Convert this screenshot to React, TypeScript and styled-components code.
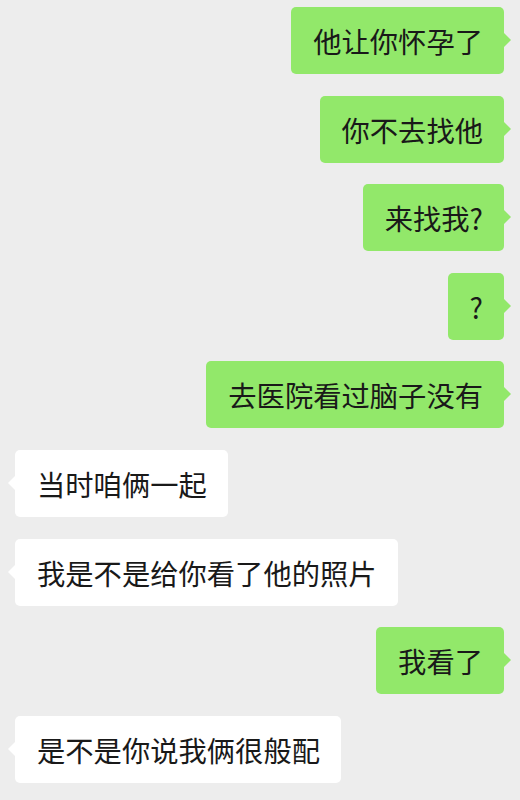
import styled, { createGlobalStyle } from 'styled-components'

const GlobalStyle = createGlobalStyle`
  html, body {
    margin: 0;
    padding: 0;
    background: #ededed;
  }
  body {
    font-family: "Noto Sans CJK SC", "Noto Sans", sans-serif;
  }
`

type Side = 'me' | 'them'

const messages: { side: Side; text: string }[] = [
  { side: 'me', text: '他让你怀孕了' },
  { side: 'me', text: '你不去找他' },
  { side: 'me', text: '来找我?' },
  { side: 'me', text: '?' },
  { side: 'me', text: '去医院看过脑子没有' },
  { side: 'them', text: '当时咱俩一起' },
  { side: 'them', text: '我是不是给你看了他的照片' },
  { side: 'me', text: '我看了' },
  { side: 'them', text: '是不是你说我俩很般配' },
]

export default function App(): JSX.Element {
  return (
    <>
      <GlobalStyle />
      <ChatArea>
        {messages.map((m, i) => (
          <Row key={i} $side={m.side}>
            <Bubble $side={m.side}>{m.text}</Bubble>
          </Row>
        ))}
      </ChatArea>
    </>
  )
}

const ChatArea = styled.div`
  width: 520px;
  height: 800px;
  box-sizing: border-box;
  padding: 7px 16px 0 15px;
  display: flex;
  flex-direction: column;
  gap: 21.6px;
  overflow: hidden;
  background: #ededed;
`

const Row = styled.div<{ $side: Side }>`
  display: flex;
  justify-content: ${(p) => (p.$side === 'me' ? 'flex-end' : 'flex-start')};
`

const Bubble = styled.div<{ $side: Side }>`
  position: relative;
  padding: 17px 21px 17px 22px;
  font-size: 28.3px;
  line-height: 33px;
  color: #191919;
  border-radius: 5px;
  white-space: nowrap;
  background: ${(p) => (p.$side === 'me' ? '#92e86a' : '#ffffff')};

  &::after {
    content: '';
    position: absolute;
    top: 26px;
    border: 7px solid transparent;
    ${(p) =>
      p.$side === 'me'
        ? `right: -7px; border-right-width: 0; border-left-color: #92e86a;`
        : `left: -7px; border-left-width: 0; border-right-color: #ffffff;`}
  }
`
